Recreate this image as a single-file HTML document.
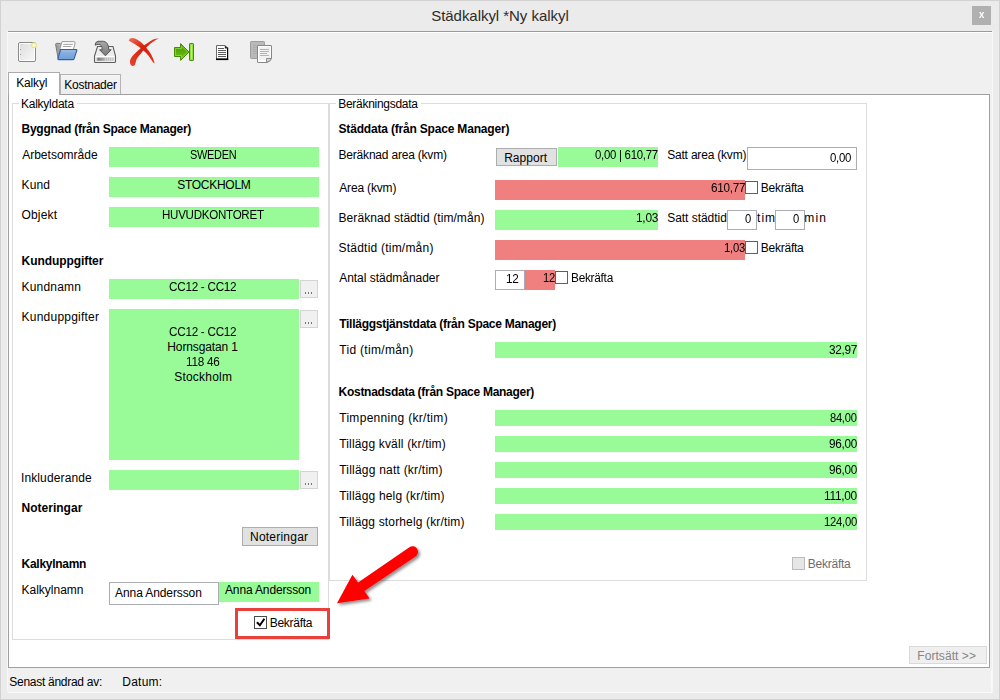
<!DOCTYPE html>
<html><head><meta charset="utf-8">
<style>
*{box-sizing:border-box;margin:0;padding:0}
html,body{width:1000px;height:700px;overflow:hidden;background:#ebebeb}
body{font-family:"Liberation Sans",sans-serif;font-size:12px;color:#000;position:relative}
.a{position:absolute}
.t{position:absolute;white-space:pre}
</style></head><body>
<div class="a" style="left:0px;top:0px;width:1000px;height:700px;background:#ebebeb;border:1px solid #d2d2d2;"></div>
<div class="a" style="left:8px;top:31px;width:984px;height:661px;background:#f0f0f0;"></div>
<div class="a" style="left:8px;top:31px;width:984px;height:1px;background:#9a9a9a;"></div>
<div class="a" style="left:8px;top:32px;width:984px;height:1px;background:#ffffff;"></div>
<div class="a" style="left:7px;top:31px;width:1px;height:661px;background:#f6f6f6;"></div>
<div class="a" style="left:992px;top:31px;width:1px;height:662px;background:#f6f6f6;"></div>
<div class="a" style="left:8px;top:692px;width:984px;height:1px;background:#fafafa;"></div>
<div class="a" style="left:991px;top:670px;width:1px;height:23px;background:#fafafa;"></div>
<div class="t" style="left:431.20px;top:7.30px;font-size:15px;line-height:17px;height:17px;letter-spacing:-0.040px;color:#2b2b2b;">Städkalkyl *Ny kalkyl</div>
<div class="a" style="left:972px;top:6px;width:19px;height:19px;background:#b0b0b0;"></div>
<div class="t" style="left:978.60px;top:8.54px;font-size:10px;line-height:12px;height:12px;letter-spacing:0.000px;font-weight:bold;color:#fff;transform:scaleX(0.9643);transform-origin:0.00px 50%;">x</div>
<svg class="a" style="left:8px;top:33px" width="300" height="38" viewBox="8 33 300 38">
<defs>
<linearGradient id="gdoc" x1="0" y1="0" x2="1" y2="1"><stop offset="0" stop-color="#dedede"/><stop offset="1" stop-color="#f7f7f7"/></linearGradient>
<linearGradient id="gfold" x1="0" y1="0" x2="1" y2="0"><stop offset="0" stop-color="#a0a0a0"/><stop offset="1" stop-color="#dcdcdc"/></linearGradient><linearGradient id="gblue" x1="0" y1="0" x2="0" y2="1"><stop offset="0" stop-color="#8fb4e3"/><stop offset="1" stop-color="#729fd8"/></linearGradient>
<linearGradient id="ggreen" x1="0" y1="0" x2="0" y2="1"><stop offset="0" stop-color="#4e9a06"/><stop offset="0.5" stop-color="#58ac08"/><stop offset="1" stop-color="#74d018"/></linearGradient>
<linearGradient id="gred" x1="0" y1="0" x2="1" y2="1"><stop offset="0" stop-color="#f0705c"/><stop offset="0.45" stop-color="#d42008"/><stop offset="1" stop-color="#ee3520"/></linearGradient><linearGradient id="gred2" x1="1" y1="0" x2="0" y2="1"><stop offset="0" stop-color="#e83a24"/><stop offset="0.45" stop-color="#d42008"/><stop offset="1" stop-color="#e8442e"/></linearGradient>
<linearGradient id="gstrip" x1="0" y1="0" x2="1" y2="0"><stop offset="0" stop-color="#c0c0c0"/><stop offset="0.1" stop-color="#7a7a7a"/><stop offset="0.45" stop-color="#b0b0b0"/><stop offset="1" stop-color="#c8c8c8"/></linearGradient><linearGradient id="garr" x1="0" y1="0" x2="0" y2="1"><stop offset="0" stop-color="#a8a8a8"/><stop offset="1" stop-color="#7a7a7a"/></linearGradient>
</defs>
<!-- new document -->
<rect x="18.5" y="42.5" width="17" height="19" rx="1.5" fill="#fff" stroke="#888a85"/>
<rect x="20" y="44" width="14" height="16" fill="url(#gdoc)"/>
<rect x="20" y="49" width="1" height="1" fill="#999"/><rect x="20" y="54" width="1" height="1" fill="#999"/>
<circle cx="34" cy="45.2" r="2.4" fill="#f8f8ee" stroke="#ebe66c" stroke-width="1.2" stroke-opacity="0.9"/>
<!-- folder open -->
<path d="M55.6 44.4 Q55.6 43.4 56.6 43.4 L60.2 43.4 L61.2 44.8 L66 44.8 L66 57 L58.2 58.8 Z" fill="url(#gfold)" stroke="#707070" stroke-width="0.9"/>
<path d="M57.3 45.5 L58.9 57 M58.8 45.5 L59.8 55" stroke="#8c8c8c" stroke-width="0.6"/>
<path d="M59.6 50 L62 41.6 L73.8 41.6 Q75.6 41.8 75 43.6 L73.2 50 Z" fill="#fdfdfd" stroke="#8e8e8a" stroke-width="0.9"/>
<path d="M63.3 44.4 L72.8 44.4 M62.8 46.5 L71.3 46.5" stroke="#9a9a9a" stroke-width="0.9"/>
<path d="M60.6 49.6 L76.2 49.6 Q77.1 49.7 76.8 50.6 L74 59 Q73.7 59.6 72.9 59.6 L58.6 59.6 Q57.6 59.5 57.9 58.6 Z" fill="url(#gblue)" stroke="#2f60a6" stroke-width="1.1"/>
<path d="M61 50.8 L75.6 50.8" stroke="#b4cdee" stroke-width="0.8"/>
<!-- save (drive with arrow) -->
<path d="M97.5 46.5 L113 46.5 L115.5 56 L115.5 61.5 Q115.5 62.5 114.5 62.5 L95.5 62.5 Q94.5 62.5 94.5 61.5 L94.5 56 Z" fill="#ededed" stroke="#5e5e5e" stroke-width="1.1"/>
<path d="M95.6 56.5 L114.4 56.5" stroke="#fff" stroke-width="1"/>
<rect x="96.5" y="57.6" width="17.5" height="3.2" fill="url(#gstrip)"/>
<path d="M105.5 57.6 v3.2 M107.5 57.6 v3.2 M109.5 57.6 v3.2 M111.5 57.6 v3.2 M113.3 57.6 v3.2" stroke="#dedede" stroke-width="0.8"/>
<path d="M95.2 45.2 Q95 42 98 41.3 L103.5 41.3 Q108.6 42 108.8 49.8 L111.2 49.8 L105.4 55.8 L99.6 49.8 L102.2 49.8 Q102.4 44.6 98.6 44.4 Q96.5 44.4 95.2 45.2 Z" fill="url(#garr)" stroke="#555" stroke-width="1" stroke-linejoin="round"/>
<!-- red X -->
<path d="M128.6 40.4 Q129.5 38.2 131.8 38.1 Q134 38.2 136.6 39.3 Q140.5 41.5 143.4 44.4 Q145.5 46.5 146.8 48.6 Q149.5 51.5 151.2 54.4 Q153.5 58.5 154.7 63.4 Q153.8 63.2 153.1 62.6 Q151 59 148.3 55.4 Q146 52.8 143.4 50.5 Q141.5 48.8 139.5 47.3 Q136.5 45.2 133.7 43.5 Q131 42 128.6 40.4 Z" fill="url(#gred)"/>
<path d="M158.8 38.3 Q156 38.6 153.1 39.6 Q150 41.2 147.3 43.2 Q145 44.6 143.4 45.9 Q141 47.8 138.6 50 Q135.5 52.8 132.7 55.8 Q130.8 58 130.1 60.2 Q129.7 62.2 130.3 64.1 Q131.2 66 132.7 66 Q134.2 65.9 134.7 65.1 Q135.4 63.8 135.7 62.2 Q136.2 60 137.1 58.3 Q138.8 55.8 141 53.4 Q143.2 50.6 145.8 48.1 Q148.5 45.4 151.2 43 Q155 40.4 158.8 38.3 Z" fill="url(#gred2)"/>
<!-- green go-last -->
<path d="M174.5 47.5 L180.6 47.5 L180.6 43.6 L189 52 L180.6 60.4 L180.6 56.5 L174.5 56.5 Z" fill="url(#ggreen)" stroke="#438c02" stroke-width="1" stroke-linejoin="round"/>
<path d="M175.5 48.5 L181.6 48.5 L181.6 46 L187.6 52 L181.6 58 L181.6 55.5 L175.5 55.5 Z" fill="none" stroke="#a4e45c" stroke-width="0.8" stroke-opacity="0.75"/>
<rect x="189.5" y="43.5" width="4" height="17" rx="0.6" fill="#8fe03c" stroke="#438c02" stroke-width="1"/>
<rect x="191" y="45" width="1" height="14" fill="#b6f07c"/>
<!-- small document -->
<path d="M216.5 45.5 L225 45.5 L227.5 48 L227.5 59 L216.5 59 Z" fill="#fff" stroke="#6a6a6a" stroke-width="1"/>
<path d="M216 59.3 L228.2 59.3" stroke="#000" stroke-width="1.6"/>
<path d="M227.6 47.6 L227.6 60" stroke="#000" stroke-width="1.2"/>
<path d="M224.8 45.2 L228 48.4 L224.8 48.4 Z" fill="#222"/>
<path d="M218 48.5 h6 M218 50.5 h8 M218 52.5 h8 M218 54.5 h8 M218 56.5 h8" stroke="#5a5a5a" stroke-width="1"/>
<!-- copy (disabled) -->
<rect x="250.5" y="41.5" width="14" height="17" rx="0.8" fill="#b9b9b9" stroke="#9e9e9e" stroke-width="1"/>
<path d="M253 45.5 h5 M253 47.5 h5 M253 49.5 h5 M253 51.5 h5 M253 53.5 h5" stroke="#adadad" stroke-width="1"/>
<path d="M257.5 46 Q257.5 45.5 258 45.5 L271 45.5 Q271.5 45.5 271.5 46 L271.5 58 Q271 61 267 62.5 L258 62.5 Q257.5 62.5 257.5 62 Z" fill="#fff" stroke="#868686" stroke-width="1"/>
<rect x="259" y="47" width="11" height="13" fill="#f1f1f1"/>
<path d="M260 49.5 h9 M260 51.5 h9 M260 53.5 h7 M260 55.5 h9" stroke="#b4b4b4" stroke-width="1"/>
<path d="M266.5 62.3 L266.5 58.5 L271.3 58.5 Q271 61.3 266.5 62.3 Z" fill="#d4d4d4" stroke="#868686" stroke-width="0.9"/>
</svg>
<div class="a" style="left:8px;top:94px;width:982px;height:574px;background:#fff;border:1px solid #a0a0a0;"></div>
<div class="a" style="left:60px;top:74px;width:61px;height:20px;border:1px solid #b4b4b4;border-bottom:none;background:linear-gradient(#f4f4f4,#ececec);"></div>
<div class="a" style="left:8px;top:72px;width:52px;height:23px;background:#fff;border:1px solid #acacac;border-bottom:none;"></div>
<div class="t" style="left:16.24px;top:75.84px;font-size:12px;line-height:14px;height:14px;letter-spacing:-0.160px;">Kalkyl</div>
<div class="t" style="left:64.20px;top:77.84px;font-size:12px;line-height:14px;height:14px;letter-spacing:-0.238px;">Kostnader</div>
<div class="a" style="left:12px;top:103px;width:317px;height:537px;border:1px solid #dcdcdc;"></div>
<div class="a" style="left:329px;top:103px;width:538px;height:478px;border:1px solid #dcdcdc;"></div>
<div class="a" style="left:19px;top:98px;width:58px;height:12px;background:#fff;"></div>
<div class="a" style="left:336px;top:98px;width:85px;height:12px;background:#fff;"></div>
<div class="t" style="left:21.00px;top:97.14px;font-size:12px;line-height:14px;height:14px;letter-spacing:-0.249px;">Kalkyldata</div>
<div class="t" style="left:338.20px;top:97.14px;font-size:12px;line-height:14px;height:14px;letter-spacing:-0.277px;">Beräkningsdata</div>
<div class="t" style="left:21.56px;top:122.34px;font-size:12px;line-height:14px;height:14px;letter-spacing:-0.256px;font-weight:bold;">Byggnad (från Space Manager)</div>
<div class="a" style="left:109px;top:147px;width:210px;height:20px;background:#98fb98;"></div>
<div class="t" style="left:22.20px;top:147.84px;font-size:12px;line-height:14px;height:14px;letter-spacing:0.004px;">Arbetsområde</div>
<div class="t" style="left:190.20px;top:147.84px;font-size:12px;line-height:14px;height:14px;letter-spacing:-0.280px;transform:scaleX(0.9103);transform-origin:0.00px 50%;">SWEDEN</div>
<div class="a" style="left:109px;top:177px;width:210px;height:20px;background:#98fb98;"></div>
<div class="t" style="left:21.56px;top:177.84px;font-size:12px;line-height:14px;height:14px;letter-spacing:0.113px;">Kund</div>
<div class="t" style="left:177.20px;top:177.84px;font-size:12px;line-height:14px;height:14px;letter-spacing:-0.275px;">STOCKHOLM</div>
<div class="a" style="left:109px;top:207px;width:210px;height:20px;background:#98fb98;"></div>
<div class="t" style="left:21.56px;top:207.84px;font-size:12px;line-height:14px;height:14px;letter-spacing:0.148px;">Objekt</div>
<div class="t" style="left:162.20px;top:207.84px;font-size:12px;line-height:14px;height:14px;letter-spacing:-0.280px;transform:scaleX(0.9642);transform-origin:0.00px 50%;">HUVUDKONTORET</div>
<div class="t" style="left:21.56px;top:253.84px;font-size:12px;line-height:14px;height:14px;letter-spacing:-0.068px;font-weight:bold;">Kunduppgifter</div>
<div class="a" style="left:109px;top:279px;width:190px;height:20px;background:#98fb98;"></div>
<div class="t" style="left:21.56px;top:279.84px;font-size:12px;line-height:14px;height:14px;letter-spacing:0.191px;">Kundnamn</div>
<div class="t" style="left:169.30px;top:279.84px;font-size:12px;line-height:14px;height:14px;letter-spacing:-0.280px;transform:scaleX(0.9769);transform-origin:0.00px 50%;">CC12 - CC12</div>
<div class="a" style="left:109px;top:309px;width:190px;height:151px;background:#98fb98;"></div>
<div class="t" style="left:21.56px;top:309.84px;font-size:12px;line-height:14px;height:14px;letter-spacing:0.228px;">Kunduppgifter</div>
<div class="t" style="left:169.30px;top:324.84px;font-size:12px;line-height:14px;height:14px;letter-spacing:-0.280px;transform:scaleX(0.9769);transform-origin:0.00px 50%;">CC12 - CC12</div>
<div class="t" style="left:167.30px;top:339.84px;font-size:12px;line-height:14px;height:14px;letter-spacing:-0.118px;">Hornsgatan 1</div>
<div class="t" style="left:186.30px;top:354.84px;font-size:12px;line-height:14px;height:14px;letter-spacing:-0.280px;transform:scaleX(0.9797);transform-origin:0.00px 50%;">118 46</div>
<div class="t" style="left:174.20px;top:369.84px;font-size:12px;line-height:14px;height:14px;letter-spacing:0.213px;">Stockholm</div>
<div class="a" style="left:109px;top:470px;width:190px;height:20px;background:#98fb98;"></div>
<div class="t" style="left:20.92px;top:470.84px;font-size:12px;line-height:14px;height:14px;letter-spacing:0.135px;">Inkluderande</div>
<div class="a" style="left:300px;top:280px;width:18px;height:18px;background:#f0f0f0;border:1px solid #d4d4d4;"></div>
<div class="a" style="left:305px;top:292px;width:1px;height:2px;background:#74747e;"></div>
<div class="a" style="left:308px;top:292px;width:1px;height:2px;background:#74747e;"></div>
<div class="a" style="left:311px;top:292px;width:1px;height:2px;background:#74747e;"></div>
<div class="a" style="left:300px;top:310px;width:18px;height:18px;background:#f0f0f0;border:1px solid #d4d4d4;"></div>
<div class="a" style="left:305px;top:322px;width:1px;height:2px;background:#74747e;"></div>
<div class="a" style="left:308px;top:322px;width:1px;height:2px;background:#74747e;"></div>
<div class="a" style="left:311px;top:322px;width:1px;height:2px;background:#74747e;"></div>
<div class="a" style="left:300px;top:471px;width:18px;height:18px;background:#f0f0f0;border:1px solid #d4d4d4;"></div>
<div class="a" style="left:305px;top:483px;width:1px;height:2px;background:#74747e;"></div>
<div class="a" style="left:308px;top:483px;width:1px;height:2px;background:#74747e;"></div>
<div class="a" style="left:311px;top:483px;width:1px;height:2px;background:#74747e;"></div>
<div class="t" style="left:21.56px;top:500.84px;font-size:12px;line-height:14px;height:14px;letter-spacing:0.009px;font-weight:bold;">Noteringar</div>
<div class="a" style="left:242px;top:527px;width:76px;height:19px;background:#e1e1e1;border:1px solid #adadad;"></div>
<div class="t" style="left:250.05px;top:529.84px;font-size:12px;line-height:14px;height:14px;letter-spacing:0.217px;">Noteringar</div>
<div class="t" style="left:21.56px;top:556.84px;font-size:12px;line-height:14px;height:14px;letter-spacing:-0.280px;font-weight:bold;">Kalkylnamn</div>
<div class="t" style="left:21.56px;top:582.84px;font-size:12px;line-height:14px;height:14px;letter-spacing:-0.012px;">Kalkylnamn</div>
<div class="a" style="left:109px;top:582px;width:110px;height:23px;background:#fff;border:1px solid #abadb3;"></div>
<div class="t" style="left:115.10px;top:585.84px;font-size:12px;line-height:14px;height:14px;letter-spacing:-0.100px;">Anna Andersson</div>
<div class="a" style="left:219px;top:582px;width:100px;height:20px;background:#98fb98;"></div>
<div class="t" style="left:225.00px;top:582.84px;font-size:12px;line-height:14px;height:14px;letter-spacing:-0.142px;">Anna Andersson</div>
<div class="a" style="left:235px;top:608px;width:95px;height:31px;border:3px solid #e8413c;"></div>
<div class="a" style="left:254px;top:616px;width:13px;height:13px;background:#fff;border:1px solid #4a4a4a;"></div>
<svg class="a" style="left:254px;top:616px" width="13" height="13" viewBox="0 0 13 13"><path d="M2.9 6.3 L5.9 9.3 L10.4 2.8" fill="none" stroke="#000" stroke-width="2"/></svg>
<div class="t" style="left:269.75px;top:615.84px;font-size:12px;line-height:14px;height:14px;letter-spacing:-0.280px;">Bekräfta</div>
<div class="t" style="left:338.56px;top:122.14px;font-size:12px;line-height:14px;height:14px;letter-spacing:-0.186px;font-weight:bold;">Städdata (från Space Manager)</div>
<div class="t" style="left:338.56px;top:147.84px;font-size:12px;line-height:14px;height:14px;letter-spacing:-0.203px;">Beräknad area (kvm)</div>
<div class="a" style="left:496px;top:148px;width:61px;height:18px;background:#e1e1e1;border:1px solid #adadad;"></div>
<div class="t" style="left:504.20px;top:150.84px;font-size:12px;line-height:14px;height:14px;letter-spacing:0.017px;">Rapport</div>
<div class="a" style="left:558px;top:147px;width:100px;height:20px;background:#98fb98;"></div>
<div class="t" style="left:595.00px;top:147.84px;font-size:12px;line-height:14px;height:14px;letter-spacing:-0.280px;transform:scaleX(0.9482);transform-origin:0.00px 50%;">0,00 | 610,77</div>
<div class="t" style="left:667.20px;top:147.84px;font-size:12px;line-height:14px;height:14px;letter-spacing:-0.196px;">Satt area (kvm)</div>
<div class="a" style="left:747px;top:147px;width:110px;height:23px;background:#fff;border:1px solid #abadb3;"></div>
<div class="t" style="left:830.00px;top:150.84px;font-size:12px;line-height:14px;height:14px;letter-spacing:-0.280px;transform:scaleX(0.9530);transform-origin:0.00px 50%;">0,00</div>
<div class="t" style="left:339.20px;top:180.84px;font-size:12px;line-height:14px;height:14px;letter-spacing:-0.156px;">Area (kvm)</div>
<div class="a" style="left:495px;top:180px;width:250px;height:20px;background:#f08080;"></div>
<div class="t" style="left:711.40px;top:180.84px;font-size:12px;line-height:14px;height:14px;letter-spacing:-0.280px;transform:scaleX(0.9745);transform-origin:0.00px 50%;">610,77</div>
<div class="a" style="left:745px;top:181px;width:13px;height:13px;background:#fff;border:1px solid #606060;"></div>
<div class="t" style="left:760.75px;top:180.84px;font-size:12px;line-height:14px;height:14px;letter-spacing:-0.236px;">Bekräfta</div>
<div class="t" style="left:338.56px;top:210.84px;font-size:12px;line-height:14px;height:14px;letter-spacing:0.072px;">Beräknad städtid (tim/mån)</div>
<div class="a" style="left:495px;top:210px;width:163px;height:20px;background:#98fb98;"></div>
<div class="t" style="left:636.40px;top:210.54px;font-size:12px;line-height:14px;height:14px;letter-spacing:-0.280px;transform:scaleX(0.9929);transform-origin:0.00px 50%;">1,03</div>
<div class="t" style="left:667.20px;top:210.84px;font-size:12px;line-height:14px;height:14px;letter-spacing:-0.036px;">Satt städtid</div>
<div class="a" style="left:727px;top:210px;width:30px;height:20px;background:#fff;border:1px solid #abadb3;"></div>
<div class="t" style="left:745.00px;top:212.34px;font-size:12px;line-height:14px;height:14px;letter-spacing:0.000px;transform:scaleX(0.9328);transform-origin:0.00px 50%;">0</div>
<div class="t" style="left:757.10px;top:210.84px;font-size:12px;line-height:14px;height:14px;letter-spacing:0.975px;">tim</div>
<div class="a" style="left:775px;top:210px;width:30px;height:20px;background:#fff;border:1px solid #abadb3;"></div>
<div class="t" style="left:793.00px;top:212.34px;font-size:12px;line-height:14px;height:14px;letter-spacing:0.000px;transform:scaleX(0.9328);transform-origin:0.00px 50%;">0</div>
<div class="t" style="left:804.30px;top:210.84px;font-size:12px;line-height:14px;height:14px;letter-spacing:1.150px;">min</div>
<div class="t" style="left:338.56px;top:240.84px;font-size:12px;line-height:14px;height:14px;letter-spacing:0.218px;">Städtid (tim/mån)</div>
<div class="a" style="left:495px;top:240px;width:250px;height:20px;background:#f08080;"></div>
<div class="t" style="left:724.20px;top:240.84px;font-size:12px;line-height:14px;height:14px;letter-spacing:-0.280px;transform:scaleX(0.9397);transform-origin:0.00px 50%;">1,03</div>
<div class="a" style="left:745px;top:241px;width:13px;height:13px;background:#fff;border:1px solid #606060;"></div>
<div class="t" style="left:760.75px;top:240.84px;font-size:12px;line-height:14px;height:14px;letter-spacing:-0.236px;">Bekräfta</div>
<div class="t" style="left:339.20px;top:270.84px;font-size:12px;line-height:14px;height:14px;letter-spacing:-0.025px;">Antal städmånader</div>
<div class="a" style="left:525px;top:270px;width:30px;height:20px;background:#f08080;"></div>
<div class="a" style="left:495px;top:270px;width:30px;height:20px;background:#fff;border:1px solid #abadb3;"></div>
<div class="t" style="left:506.30px;top:271.84px;font-size:12px;line-height:14px;height:14px;letter-spacing:-0.280px;transform:scaleX(0.9754);transform-origin:0.00px 50%;">12</div>
<div class="t" style="left:542.75px;top:270.84px;font-size:12px;line-height:14px;height:14px;letter-spacing:-0.280px;transform:scaleX(0.9332);transform-origin:0.00px 50%;">12</div>
<div class="a" style="left:555px;top:271px;width:13px;height:13px;background:#fff;border:1px solid #606060;"></div>
<div class="t" style="left:570.75px;top:270.84px;font-size:12px;line-height:14px;height:14px;letter-spacing:-0.280px;transform:scaleX(0.9885);transform-origin:0.00px 50%;">Bekräfta</div>
<div class="t" style="left:339.20px;top:317.14px;font-size:12px;line-height:14px;height:14px;letter-spacing:-0.267px;font-weight:bold;">Tilläggstjänstdata (från Space Manager)</div>
<div class="t" style="left:339.20px;top:342.84px;font-size:12px;line-height:14px;height:14px;letter-spacing:0.321px;">Tid (tim/mån)</div>
<div class="a" style="left:495px;top:342px;width:362px;height:16px;background:#98fb98;"></div>
<div class="t" style="left:829.40px;top:342.84px;font-size:12px;line-height:14px;height:14px;letter-spacing:-0.280px;transform:scaleX(0.9834);transform-origin:0.00px 50%;">32,97</div>
<div class="t" style="left:338.56px;top:384.84px;font-size:12px;line-height:14px;height:14px;letter-spacing:-0.280px;font-weight:bold;">Kostnadsdata (från Space Manager)</div>
<div class="a" style="left:495px;top:410px;width:362px;height:16px;background:#98fb98;"></div>
<div class="t" style="left:339.20px;top:410.84px;font-size:12px;line-height:14px;height:14px;letter-spacing:0.308px;">Timpenning (kr/tim)</div>
<div class="t" style="left:830.20px;top:410.84px;font-size:12px;line-height:14px;height:14px;letter-spacing:-0.280px;transform:scaleX(0.9280);transform-origin:0.00px 50%;">84,00</div>
<div class="a" style="left:495px;top:436px;width:362px;height:16px;background:#98fb98;"></div>
<div class="t" style="left:339.20px;top:436.84px;font-size:12px;line-height:14px;height:14px;letter-spacing:0.169px;">Tillägg kväll (kr/tim)</div>
<div class="t" style="left:829.40px;top:436.84px;font-size:12px;line-height:14px;height:14px;letter-spacing:-0.280px;transform:scaleX(0.9778);transform-origin:0.00px 50%;">96,00</div>
<div class="a" style="left:495px;top:462px;width:362px;height:16px;background:#98fb98;"></div>
<div class="t" style="left:339.20px;top:462.84px;font-size:12px;line-height:14px;height:14px;letter-spacing:0.220px;">Tillägg natt (kr/tim)</div>
<div class="t" style="left:829.40px;top:462.84px;font-size:12px;line-height:14px;height:14px;letter-spacing:-0.280px;transform:scaleX(0.9778);transform-origin:0.00px 50%;">96,00</div>
<div class="a" style="left:495px;top:488px;width:362px;height:16px;background:#98fb98;"></div>
<div class="t" style="left:339.20px;top:488.84px;font-size:12px;line-height:14px;height:14px;letter-spacing:0.185px;">Tillägg helg (kr/tim)</div>
<div class="t" style="left:824.20px;top:488.84px;font-size:12px;line-height:14px;height:14px;letter-spacing:-0.280px;transform:scaleX(0.9910);transform-origin:0.00px 50%;">111,00</div>
<div class="a" style="left:495px;top:514px;width:362px;height:16px;background:#98fb98;"></div>
<div class="t" style="left:339.20px;top:514.84px;font-size:12px;line-height:14px;height:14px;letter-spacing:0.154px;">Tillägg storhelg (kr/tim)</div>
<div class="t" style="left:824.20px;top:514.84px;font-size:12px;line-height:14px;height:14px;letter-spacing:-0.280px;transform:scaleX(0.9405);transform-origin:0.00px 50%;">124,00</div>
<div class="a" style="left:792px;top:557px;width:13px;height:13px;background:#e6e6e6;border:1px solid #bcbcbc;"></div>
<div class="t" style="left:807.75px;top:556.84px;font-size:12px;line-height:14px;height:14px;letter-spacing:-0.236px;color:#6d6d6d;">Bekräfta</div>
<div class="a" style="left:909px;top:646px;width:78px;height:18px;background:#efefef;border:1px solid #d9d9d9;"></div>
<div class="t" style="left:917.30px;top:648.84px;font-size:12px;line-height:14px;height:14px;letter-spacing:0.060px;color:#858585;">Fortsätt &gt;&gt;</div>
<div class="t" style="left:9.30px;top:674.84px;font-size:12px;line-height:14px;height:14px;letter-spacing:-0.280px;">Senast ändrad av:</div>
<div class="t" style="left:122.30px;top:674.84px;font-size:12px;line-height:14px;height:14px;letter-spacing:0.240px;">Datum:</div>
<svg class="a" style="left:320px;top:530px" width="120" height="100" viewBox="320 530 120 100">
<defs><filter id="sh" x="-20%" y="-20%" width="150%" height="150%"><feGaussianBlur in="SourceAlpha" stdDeviation="1.8"/><feOffset dx="1.8" dy="2.3"/><feComponentTransfer><feFuncA type="linear" slope="0.45"/></feComponentTransfer><feMerge><feMergeNode/><feMergeNode in="SourceGraphic"/></feMerge></filter></defs>
<g filter="url(#sh)" fill="#ff0000" stroke="none">
<path d="M337 603.3 L352.4 574.7 L358.1 582.4 L409.4 547.2 A5.4 5.4 0 0 1 415.6 556.4 L364.4 591 L369.6 598.4 Z"/>
</g></svg>
</body></html>
